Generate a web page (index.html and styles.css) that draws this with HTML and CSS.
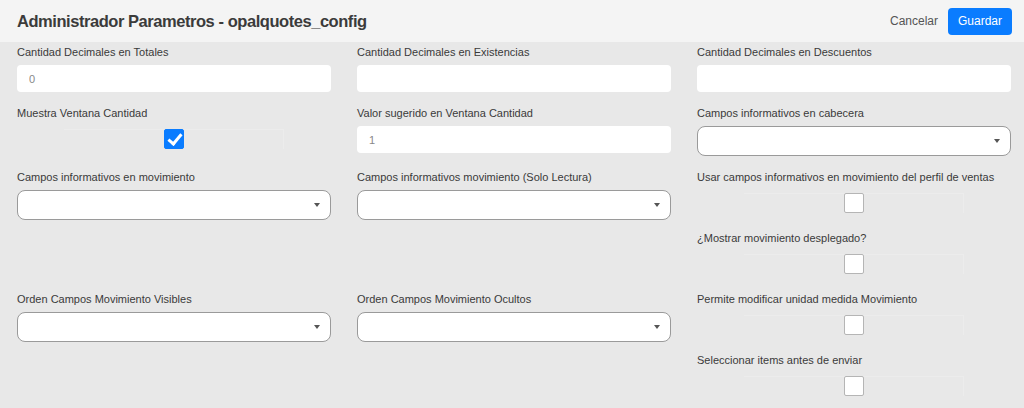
FILE: index.html
```html
<!DOCTYPE html>
<html>
	<head>
		<meta charset="UTF-8">
		<title>Administrador Parametros</title>
		<link rel="stylesheet" href="styles.css">
	</head>
	<body>
		<header class="topbar">
			<h1 class="title">Administrador Parametros - opalquotes_config</h1>
			<div class="actions">
				<button class="btn-link">Cancelar</button>
				<button class="btn-primary">Guardar</button>
			</div>
		</header>

		<main class="form">
			<div class="field">
				<label class="label">Cantidad Decimales en Totales</label>
				<input class="input" type="text" value="0">
			</div>
			<div class="field">
				<label class="label">Cantidad Decimales en Existencias</label>
				<input class="input" type="text" value="">
			</div>
			<div class="field">
				<label class="label">Cantidad Decimales en Descuentos</label>
				<input class="input" type="text" value="">
			</div>

			<div class="field">
				<label class="label">Muestra Ventana Cantidad</label>
				<div class="check-wrap"><span class="check checked"></span></div>
			</div>
			<div class="field">
				<label class="label">Valor sugerido en Ventana Cantidad</label>
				<input class="input" type="text" value="1">
			</div>
			<div class="field">
				<label class="label">Campos informativos en cabecera</label>
				<div class="select"><span class="caret"></span></div>
			</div>

			<div class="field">
				<label class="label">Campos informativos en movimiento</label>
				<div class="select"><span class="caret"></span></div>
			</div>
			<div class="field">
				<label class="label">Campos informativos movimiento (Solo Lectura)</label>
				<div class="select"><span class="caret"></span></div>
			</div>
			<div class="field">
				<label class="label">Usar campos informativos en movimiento del perfil de ventas</label>
				<div class="check-wrap"><span class="check"></span></div>
			</div>

			<div class="field last-col">
				<label class="label">¿Mostrar movimiento desplegado?</label>
				<div class="check-wrap"><span class="check"></span></div>
			</div>

			<div class="field">
				<label class="label">Orden Campos Movimiento Visibles</label>
				<div class="select"><span class="caret"></span></div>
			</div>
			<div class="field">
				<label class="label">Orden Campos Movimiento Ocultos</label>
				<div class="select"><span class="caret"></span></div>
			</div>
			<div class="field">
				<label class="label">Permite modificar unidad medida Movimiento</label>
				<div class="check-wrap"><span class="check"></span></div>
			</div>

			<div class="field last-col">
				<label class="label">Seleccionar items antes de enviar</label>
				<div class="check-wrap"><span class="check"></span></div>
			</div>
		</main>
	</body>
</html>
```

FILE: styles.css
```css
*{
	margin: 0;
	padding: 0;
	box-sizing: border-box;
}
body{
	background-color: #e8e8e8;
	font-family: "Liberation Sans", Arial, sans-serif;
	color: #333;
	height: 408px;
	overflow: hidden;
}

/* barra superior */
.topbar{
	height: 42px;
	background-color: #f4f4f4;
	display: flex;
	align-items: center;
	justify-content: space-between;
	padding: 0 12px 0 17px;
}
.topbar .title{
	font-size: 16.5px;
	font-weight: bold;
	color: #3b3b3b;
	letter-spacing: -0.45px;
}
.topbar .actions{
	display: flex;
	align-items: center;
	gap: 10px;
}
.btn-link{
	border: none;
	background: none;
	font-family: inherit;
	font-size: 12px;
	color: #555;
	cursor: pointer;
}
.btn-primary{
	border: none;
	background-color: #0a7cff;
	color: #fff;
	font-family: inherit;
	font-size: 12px;
	width: 64px;
	height: 27px;
	border-radius: 4px;
	cursor: pointer;
}

/* formulario en 3 columnas */
.form{
	display: grid;
	grid-template-columns: repeat(3, 314px);
	grid-template-rows: 61px 64px repeat(4, 61px);
	column-gap: 26px;
	padding: 2px 13px 0 17px;
}
.field{
	display: flex;
	flex-direction: column;
}
.field.last-col{
	grid-column: 3;
}
.label{
	font-size: 11px;
	line-height: 16px;
	color: #3a3a3a;
	margin-bottom: 5px;
}
.input{
	height: 27px;
	border: none;
	border-radius: 4px;
	background-color: #fff;
	padding-left: 12px;
	font-family: inherit;
	font-size: 11px;
	color: #888;
	outline: none;
}

.select{
	height: 30px;
	background-color: #fff;
	border: 1px solid #9a9a9a;
	border-radius: 8px;
	display: flex;
	align-items: center;
	justify-content: flex-end;
	padding-right: 10px;
}
.select .caret{
	width: 0;
	height: 0;
	border-left: 3.5px solid transparent;
	border-right: 3.5px solid transparent;
	border-top: 4px solid #555;
}

/* checkbox */
.check-wrap{
	width: 220px;
	height: 20px;
	margin: 3px auto 0;
	border-top: 1px solid #ececec;
	border-right: 1px solid #ececec;
	display: flex;
	justify-content: center;
}
.check{
	width: 20px;
	height: 20px;
	margin-top: -1px;
	background-color: #fff;
	border: 1px solid #b5b5b5;
	border-radius: 2px;
	display: block;
	position: relative;
}
.check.checked{
	background-color: #0a7cff;
	border-color: #0a7cff;
}
.check.checked::after{
	content: "";
	position: absolute;
	left: 6px;
	top: 1px;
	width: 5px;
	height: 11px;
	border-right: 3px solid #fff;
	border-bottom: 3px solid #fff;
	transform: rotate(40deg);
}
```
